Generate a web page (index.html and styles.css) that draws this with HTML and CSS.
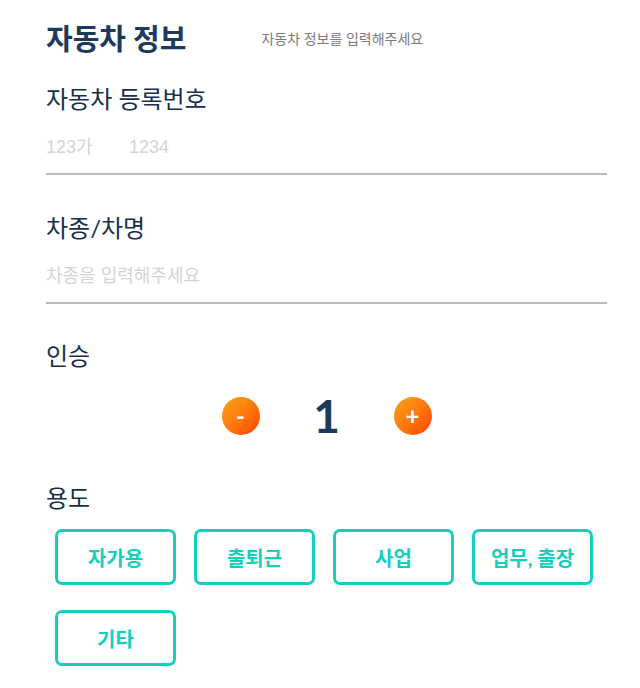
FILE: index.html
```html
<!DOCTYPE html>
<html lang="ko">
<head>
<meta charset="utf-8">
<title>자동차 정보</title>
<link rel="stylesheet" href="styles.css">
</head>
<body>
<div class="page">
  <header class="head">
    <h1 class="title">자동차 정보</h1>
    <p class="subtitle">자동차 정보를 입력해주세요</p>
  </header>

  <section class="section section-plate">
    <h2 class="label">자동차 등록번호</h2>
    <div class="field">
      <input class="input input-short" type="text" placeholder="123가">
      <input class="input" type="text" placeholder="1234">
    </div>
  </section>

  <section class="section section-model">
    <h2 class="label">차종/차명</h2>
    <div class="field">
      <input class="input" type="text" placeholder="차종을 입력해주세요">
    </div>
  </section>

  <section class="section section-seats">
    <h2 class="label">인승</h2>
    <div class="counter">
      <button class="round" type="button">-</button>
      <span class="count">1</span>
      <button class="round" type="button">+</button>
    </div>
  </section>

  <section class="section section-usage">
    <h2 class="label">용도</h2>
    <div class="chips">
      <button class="chip" type="button">자가용</button>
      <button class="chip" type="button">출퇴근</button>
      <button class="chip" type="button">사업</button>
      <button class="chip" type="button">업무, 출장</button>
      <button class="chip" type="button">기타</button>
    </div>
  </section>
</div>
</body>
</html>
```

FILE: styles.css
```css
* { box-sizing: border-box; }

html, body {
  margin: 0;
  padding: 0;
  background: #ffffff;
}

body {
  font-family: Lato, "Noto Sans CJK KR", sans-serif;
  color: #1c3a5b;
}

.page {
  width: 561px;
  margin-left: 46px;
  padding-top: 19px;
}

.head {
  display: flex;
  align-items: center;
  height: 40px;
}

.title {
  margin: 0;
  font-size: 29px;
  line-height: 40px;
  font-weight: 700;
  color: #1c3a5b;
  white-space: nowrap;
}

.subtitle {
  margin: 0 0 0 75px;
  font-size: 14px;
  line-height: 20px;
  color: #7d7a80;
  white-space: nowrap;
}

.label {
  margin: 0;
  font-size: 24px;
  line-height: 30px;
  font-weight: 400;
  color: #172f4d;
}

.section-plate { margin-top: 25px; }
.section-model { margin-top: 38px; }
.section-seats { margin-top: 37px; }
.section-usage { margin-top: 48px; }

.field {
  display: flex;
  margin-top: 15px;
  padding-bottom: 8px;
  border-bottom: 2px solid #bcbcbc;
}

.input {
  flex: 1;
  min-width: 0;
  height: 36px;
  padding: 0;
  border: none;
  outline: none;
  background: transparent;
  font-family: "Liberation Sans", "Noto Sans CJK KR", sans-serif;
  font-size: 18px;
  color: #333;
}

.input::placeholder {
  color: #d4d4d4;
}

.input-short {
  flex: 0 0 83px;
}

.counter {
  display: flex;
  justify-content: center;
  align-items: center;
  gap: 37px;
  margin-top: 26px;
  height: 38px;
}

.round {
  width: 38px;
  height: 38px;
  padding: 0;
  border: none;
  border-radius: 50%;
  background: linear-gradient(135deg, #f7a51a 0%, #ff7a0c 50%, #ff3f00 100%);
  color: #ffffff;
  font-family: Lato, sans-serif;
  font-size: 24px;
  font-weight: 700;
  line-height: 38px;
  text-align: center;
}

.count {
  width: 60px;
  text-align: center;
  font-size: 46px;
  font-weight: 700;
  line-height: 38px;
  color: #1c3a5b;
}

.chips {
  display: grid;
  grid-template-columns: repeat(4, 121px);
  column-gap: 18px;
  row-gap: 25px;
  margin-top: 16px;
  padding-left: 9px;
}

.chip {
  height: 56px;
  padding: 0;
  border: 3px solid #14cfbd;
  border-radius: 7px;
  background: #ffffff;
  color: #14cfbd;
  font-family: Lato, "Noto Sans CJK KR", sans-serif;
  font-size: 20px;
  font-weight: 700;
  white-space: nowrap;
}
```
